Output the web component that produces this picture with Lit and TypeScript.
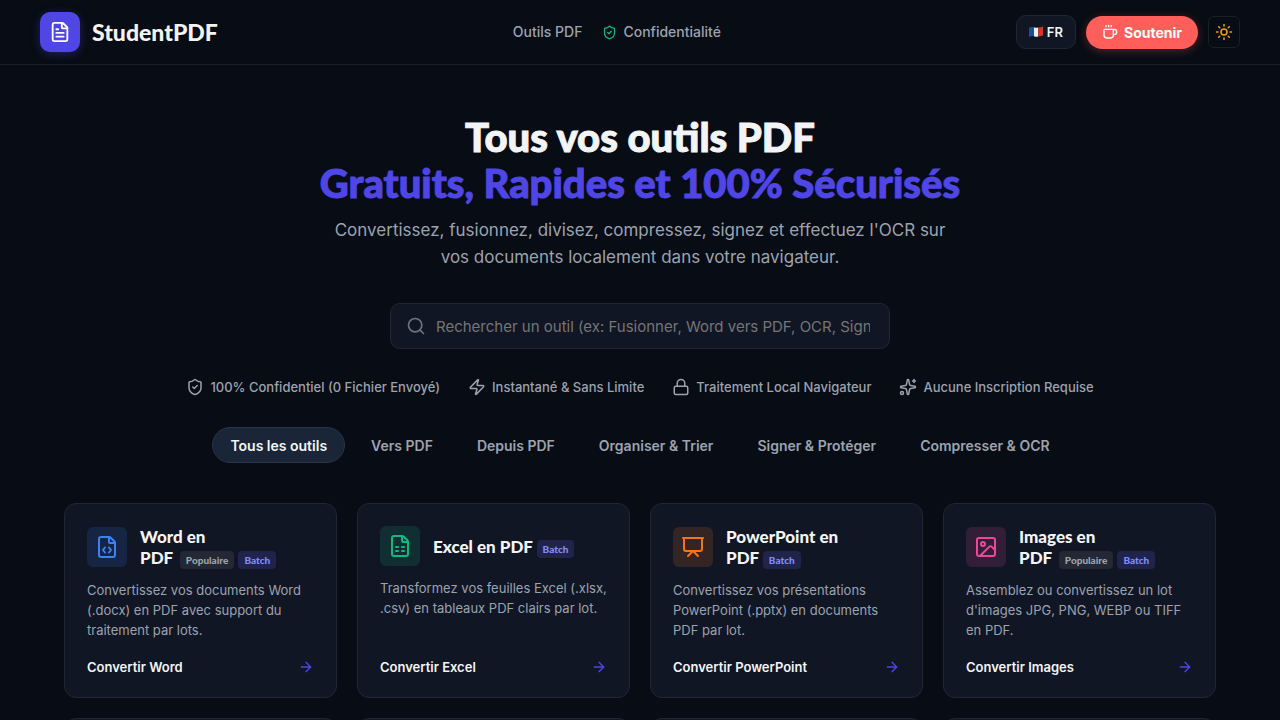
import { LitElement, html, css, svg } from "lit";
import { customElement, property, state } from "lit/decorators.js";
import { classMap } from "lit/directives/class-map.js";

const page = svg`<path d="M6 22a2 2 0 0 1-2-2V4a2 2 0 0 1 2-2h8a2.4 2.4 0 0 1 1.704.706l3.588 3.588A2.4 2.4 0 0 1 20 8v12a2 2 0 0 1-2 2z"/><path d="M14 2v5a1 1 0 0 0 1 1h5"/>`;

const shapes: Record<string, unknown> = {
  fileText: svg`${page}<path d="M10 9H8"/><path d="M16 13H8"/><path d="M16 17H8"/>`,
  fileCode: svg`${page}<path d="M10 12.5 8 15l2 2.5"/><path d="m14 12.5 2 2.5-2 2.5"/>`,
  fileSheet: svg`${page}<path d="M8 13h2"/><path d="M14 13h2"/><path d="M8 17h2"/><path d="M14 17h2"/>`,
  presentation: svg`<path d="M2 3h20"/><path d="M21 3v11a2 2 0 0 1-2 2H5a2 2 0 0 1-2-2V3"/><path d="m7 21 5-5 5 5"/>`,
  image: svg`<rect width="18" height="18" x="3" y="3" rx="2"/><circle cx="9" cy="9" r="2"/><path d="m21 15-3.086-3.086a2 2 0 0 0-2.828 0L6 21"/>`,
  shield: svg`<path d="M20 13c0 5-3.5 7.5-7.66 8.95a1 1 0 0 1-.67-.01C7.5 20.5 4 18 4 13V6a1 1 0 0 1 1-1c2 0 4.5-1.2 6.24-2.72a1.17 1.17 0 0 1 1.52 0C14.51 3.81 17 5 19 5a1 1 0 0 1 1 1z"/><path d="m9 12 2 2 4-4"/>`,
  zap: svg`<path d="M4 14a1 1 0 0 1-.78-1.63l9.9-10.2a.5.5 0 0 1 .86.46l-1.92 6.02A1 1 0 0 0 13 10h7a1 1 0 0 1 .78 1.63l-9.9 10.2a.5.5 0 0 1-.86-.46l1.92-6.02A1 1 0 0 0 11 14z"/>`,
  lock: svg`<rect width="18" height="11" x="3" y="11" rx="2"/><path d="M7 11V7a5 5 0 0 1 10 0v4"/>`,
  sparkles: svg`<path d="M11.017 2.814a1 1 0 0 1 1.966 0l1.051 5.558a2 2 0 0 0 1.594 1.594l5.558 1.051a1 1 0 0 1 0 1.966l-5.558 1.051a2 2 0 0 0-1.594 1.594l-1.051 5.558a1 1 0 0 1-1.966 0l-1.051-5.558a2 2 0 0 0-1.594-1.594l-5.558-1.051a1 1 0 0 1 0-1.966l5.558-1.051a2 2 0 0 0 1.594-1.594z"/><path d="M20 2v4"/><path d="M22 4h-4"/><circle cx="4" cy="20" r="2"/>`,
  sun: svg`<circle cx="12" cy="12" r="4"/><path d="M12 2v2M12 20v2M4.93 4.93l1.41 1.41M17.66 17.66l1.41 1.41M2 12h2M20 12h2M6.34 17.66l-1.41 1.41M19.07 4.93l-1.41 1.41"/>`,
  coffee: svg`<path d="M10 2v2M14 2v2M6 2v2"/><path d="M16 8a1 1 0 0 1 1 1v8a4 4 0 0 1-4 4H7a4 4 0 0 1-4-4V9a1 1 0 0 1 1-1h14a4 4 0 1 1 0 8h-1"/>`,
  search: svg`<path d="m21 21-4.34-4.34"/><circle cx="11" cy="11" r="8"/>`,
  arrow: svg`<path d="M5 12h14"/><path d="m12 5 7 7-7 7"/>`,
};

const icon = (name: string, size: number) => html`<svg
  class="icon" width=${size} height=${size} viewBox="0 0 24 24" aria-hidden="true">${shapes[name]}</svg>`;

const shared = css`
  * { box-sizing: border-box; }
  .icon {
    display: block;
    flex: none;
    fill: none;
    stroke: currentColor;
    stroke-width: 2;
    stroke-linecap: round;
    stroke-linejoin: round;
  }
`;

interface Tool {
  icon: string;
  tone: string;
  title: string;
  popular?: boolean;
  text: string;
  action: string;
}

const TOOLS: Tool[] = [
  { icon: "fileCode", tone: "blue", title: "Word en", popular: true, text: "Convertissez vos documents Word (.docx) en PDF avec support du traitement par lots.", action: "Convertir Word" },
  { icon: "fileSheet", tone: "green", title: "Excel en", text: "Transformez vos feuilles Excel (.xlsx, .csv) en tableaux PDF clairs par lot.", action: "Convertir Excel" },
  { icon: "presentation", tone: "orange", title: "PowerPoint en", text: "Convertissez vos présentations PowerPoint (.pptx) en documents PDF par lot.", action: "Convertir PowerPoint" },
  { icon: "image", tone: "pink", title: "Images en", popular: true, text: "Assemblez ou convertissez un lot d'images JPG, PNG, WEBP ou TIFF en PDF.", action: "Convertir Images" },
];

const FEATURES = [
  ["shield", "100% Confidentiel (0 Fichier Envoyé)"],
  ["zap", "Instantané & Sans Limite"],
  ["lock", "Traitement Local Navigateur"],
  ["sparkles", "Aucune Inscription Requise"],
];

const TABS = ["Tous les outils", "Vers PDF", "Depuis PDF", "Organiser & Trier", "Signer & Protéger", "Compresser & OCR"];

@customElement("tool-card")
class ToolCard extends LitElement {
  @property({ attribute: false }) tool?: Tool;

  static styles = [shared, css`
    :host { display: grid; min-height: 195px; }
    .card {
      display: flex;
      flex-direction: column;
      padding: 22px;
      background: #111625;
      border: 1px solid #212635;
      border-radius: 12px;
      color: #f3f4f6;
      text-decoration: none;
    }
    .head { display: flex; align-items: center; gap: 13px; margin-bottom: 12px; }
    .tile {
      display: grid;
      place-items: center;
      flex: none;
      width: 40px;
      height: 40px;
      border-radius: 6px;
    }
    .blue { color: #3b82f6; background: #172544; }
    .green { color: #10b981; background: #112e33; }
    .orange { color: #f97316; background: #342423; }
    .pink { color: #ec4899; background: #321f37; }
    .title { margin: 0; font: 900 17px/21px "Lato Black", Lato, sans-serif; }
    .keep { white-space: nowrap; }
    .tag {
      padding: 3px 6px;
      border-radius: 4px;
      font-size: 10px;
      line-height: 10px;
      color: #818cf8;
      background: #20244b;
    }
    .popular { margin-left: 3px; color: #9ca3af; background: #232834; }
    .text { margin: 0 0 19px; font-size: 13px; line-height: 20px; color: #9ca3af; }
    .foot {
      display: flex;
      align-items: center;
      justify-content: space-between;
      margin-top: auto;
      font-size: 13px;
      line-height: 16px;
      font-weight: 600;
    }
    .go { display: flex; color: #4f46e5; }
  `];

  render() {
    const t = this.tool;
    if (!t) return html`<div class="card"></div>`;
    return html`<a class="card" href="#">
      <div class="head">
        <span class="tile ${t.tone}">${icon(t.icon, 24)}</span>
        <h3 class="title">${t.title} <span class="keep">PDF ${t.popular ? html`<span class="tag popular">Populaire</span> ` : ""}<span class="tag">Batch</span></span></h3>
      </div>
      <p class="text">${t.text}</p>
      <div class="foot">${t.action}<span class="go">${icon("arrow", 16)}</span></div>
    </a>`;
  }
}

@customElement("app-root")
class AppRoot extends LitElement {
  @state() private tab = TABS[0];

  static styles = [shared, css`
    :host {
      display: block;
      min-height: 100vh;
      background: #080c14;
      color: #f3f4f6;
      font-family: Inter, sans-serif;
    }
    button, input { font-family: inherit; }
    button { cursor: pointer; }
    .bar {
      display: flex;
      align-items: center;
      justify-content: space-between;
      padding: 12px 40px;
      border-bottom: 1px solid #1b1f28;
    }
    .brand {
      display: flex;
      align-items: center;
      gap: 12px;
      color: #f3f4f6;
      font: 900 23px/40px "Lato Black", Lato, sans-serif;
      text-decoration: none;
    }
    .logo {
      display: grid;
      place-items: center;
      width: 40px;
      height: 40px;
      border-radius: 10px;
      background: #4f46e5;
      color: #fff;
      box-shadow: 0 2px 10px rgba(79, 70, 229, 0.35);
    }
    .nav { display: flex; gap: 20px; }
    .link {
      display: flex;
      align-items: center;
      gap: 6px;
      color: #9ca3af;
      font-size: 14px;
      line-height: 20px;
      font-weight: 500;
      text-decoration: none;
    }
    .safe { display: flex; color: #10b981; }
    .actions { display: flex; align-items: center; gap: 10px; }
    .lang {
      display: flex;
      align-items: center;
      gap: 4px;
      height: 34px;
      padding: 0 12px;
      border: 1px solid #212635;
      border-radius: 10px;
      background: #111625;
      color: #f3f4f6;
      font-size: 13px;
      font-weight: 600;
    }
    .support {
      display: flex;
      align-items: center;
      gap: 6px;
      height: 33px;
      padding: 0 16px;
      border-radius: 17px;
      background: #ff5e5b;
      color: #fff;
      font-size: 14px;
      font-weight: 700;
      text-decoration: none;
      box-shadow: 0 2px 10px rgba(255, 94, 91, 0.3);
    }
    .theme {
      display: grid;
      place-items: center;
      width: 32px;
      height: 32px;
      padding: 0;
      border: 1px solid #1b1f28;
      border-radius: 6px;
      background: none;
      color: #f59e0b;
    }
    .hero {
      display: flex;
      flex-direction: column;
      align-items: center;
      padding: 49px 24px 0;
      text-align: center;
    }
    .headline {
      margin: 0;
      font: 900 40px/46px "Lato Black", Lato, sans-serif;
      -webkit-text-stroke: 1px currentColor;
    }
    .accent { display: block; color: #4f46e5; }
    .lead {
      max-width: 620px;
      margin: 11px 0 32px;
      font-size: 17px;
      line-height: 27px;
      color: #9ca3af;
    }
    .search {
      display: flex;
      align-items: center;
      gap: 10px;
      width: 100%;
      max-width: 500px;
      height: 46px;
      padding: 0 16px 0 15px;
      border: 1px solid #212635;
      border-radius: 10px;
      background: #111625;
      color: #6b7280;
    }
    .field {
      flex: 1;
      min-width: 0;
      padding: 0 3px 0 0;
      border: 0;
      outline: 0;
      background: none;
      color: #f3f4f6;
      font-size: 15px;
    }
    .field::placeholder { color: #757575; }
    .features {
      display: flex;
      flex-wrap: wrap;
      justify-content: center;
      gap: 8px 28px;
      margin: 28px 0 0;
      padding: 0;
      list-style: none;
    }
    .feature {
      display: flex;
      align-items: center;
      gap: 6px;
      color: #9ca3af;
      font-size: 13px;
      line-height: 20px;
      font-weight: 500;
    }
    .tabs {
      display: flex;
      flex-wrap: wrap;
      justify-content: center;
      gap: 8px;
      margin: 30px 0 40px;
    }
    .tab {
      height: 36px;
      padding: 0 17px;
      border: 1px solid transparent;
      border-radius: 18px;
      background: none;
      color: #9ca3af;
      font-size: 14px;
      font-weight: 600;
    }
    .active { background: #1b2538; border-color: #2a3347; color: #f3f4f6; }
    .grid {
      display: grid;
      grid-template-columns: repeat(auto-fill, minmax(260px, 1fr));
      gap: 20px;
      padding: 0 64px 40px;
    }
  `];

  render() {
    return html`
      <header class="bar">
        <a class="brand" href="#"><span class="logo">${icon("fileText", 22)}</span>StudentPDF</a>
        <nav class="nav">
          <a class="link" href="#">Outils PDF</a>
          <a class="link" href="#"><span class="safe">${icon("shield", 15)}</span>Confidentialité</a>
        </nav>
        <div class="actions">
          <button class="lang">
            <svg width="14" height="12" viewBox="0 0 14 12" aria-hidden="true">
              <path fill="#14529c" d="M0 1.8Q2.5.4 5 1.2v9Q2.500 9.600 0 11z"/>
              <path fill="#f0f0f0" d="M5 1.200Q7 2 9.300 1.600v9Q7 11 5 10.200z"/>
              <path fill="#d8352f" d="M9.300 1.600Q12 1.200 14 .4v9.200Q12 10.200 9.300 10.600z"/>
            </svg>FR
          </button>
          <a class="support" href="#">${icon("coffee", 16)}Soutenir</a>
          <button class="theme" aria-label="Thème">${icon("sun", 18)}</button>
        </div>
      </header>
      <main>
        <section class="hero">
          <h1 class="headline">Tous vos outils PDF <span class="accent">Gratuits, Rapides et 100% Sécurisés</span></h1>
          <p class="lead">Convertissez, fusionnez, divisez, compressez, signez et effectuez l'OCR sur vos documents localement dans votre navigateur.</p>
          <label class="search">${icon("search", 20)}
            <input class="field" type="text" placeholder="Rechercher un outil (ex: Fusionner, Word vers PDF, OCR, Signer...)" />
          </label>
          <ul class="features">
            ${FEATURES.map(([name, label]) => html`<li class="feature">${icon(name, 18)}${label}</li>`)}
          </ul>
          <div class="tabs">
            ${TABS.map((name) => html`<button class=${classMap({ tab: true, active: name === this.tab })}
              @click=${() => (this.tab = name)}>${name}</button>`)}
          </div>
        </section>
        <section class="grid">
          ${TOOLS.map((tool) => html`<tool-card .tool=${tool}></tool-card>`)}
          ${TOOLS.map(() => html`<tool-card></tool-card>`)}
        </section>
      </main>`;
  }
}
